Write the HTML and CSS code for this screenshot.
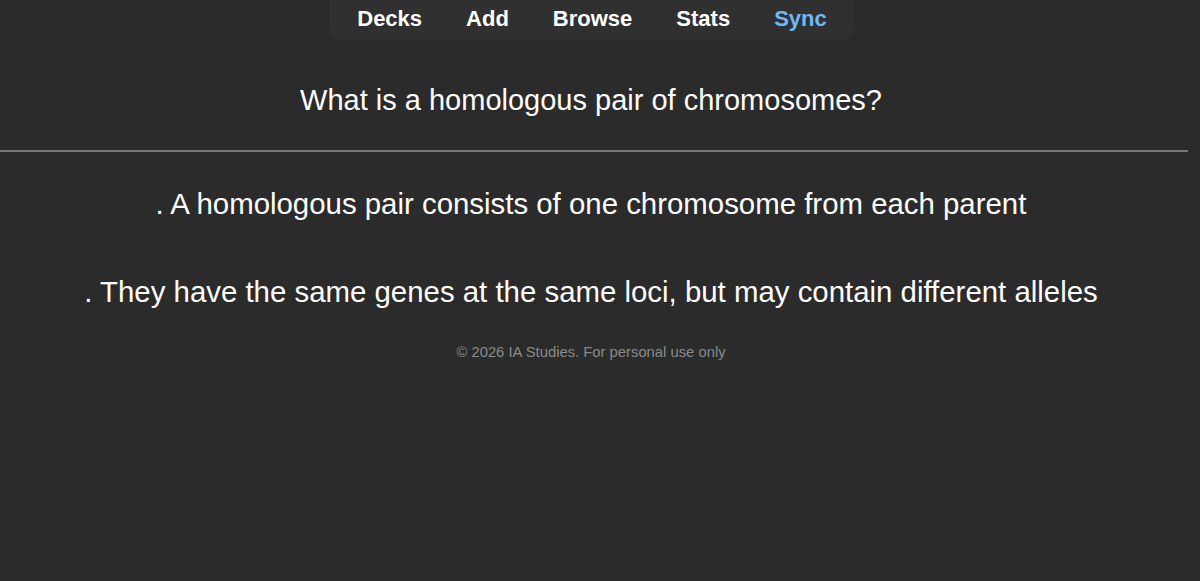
FILE: index.html
```html
<!DOCTYPE html>
<html lang="en">
<head>
    <meta charset="UTF-8">
    <meta name="viewport" content="width=device-width, initial-scale=1.0">
    <title>IA Studies - Review</title>
    <link rel="stylesheet" href="styles.css">
</head>
<body>

    <!-- Top navigation -->
    <div class="nav-wrap">
        <nav class="nav-bar">
            <a href="#">Decks</a>
            <a href="#">Add</a>
            <a href="#">Browse</a>
            <a href="#">Stats</a>
            <a href="#" class="sync">Sync</a>
        </nav>
    </div>

    <!-- Card -->
    <div class="card">
        <div class="question">What is a homologous pair of chromosomes?</div>
        <hr class="divider">
        <div class="answer">
            <p>. A homologous pair consists of one chromosome from each parent</p>
            <p>. They have the same genes at the same loci, but may contain different alleles</p>
        </div>
    </div>

    <div class="footer">© 2026 IA Studies. For personal use only</div>

</body>
</html>
```

FILE: styles.css
```css
/* Page */
body {
    margin: 0;
    background-color: #2b2b2b;
    color: #ffffff;
    font-family: "Liberation Sans", Arial, sans-serif;
}

/* Navigation */
.nav-wrap {
    width: 1182px;
    display: flex;
    justify-content: center;
}

.nav-bar {
    display: flex;
    align-items: center;
    height: 40px;
    padding: 0 26px 0 28px;
    background-color: #303030;
    border-radius: 0 0 12px 12px;
}

.nav-bar a {
    color: #ffffff;
    text-decoration: none;
    font-weight: bold;
    font-size: 22px;
    margin-right: 44px;
    padding-bottom: 3px;
}

.nav-bar a:last-child {
    margin-right: 0;
}

.nav-bar a.sync {
    color: #6fb8f7;
}

/* Card */
.card {
    width: 1182px;
}

.question {
    text-align: center;
    font-size: 29px;
    margin-top: 44px;
    line-height: 32px;
}

.divider {
    width: 1188px;
    margin: 34px 0 0 0;
    border: none;
    border-top: 2px solid #777777;
    height: 0;
}

.answer {
    text-align: center;
    font-size: 29.4px;
    margin-top: 36px;
}

.answer p {
    margin: 0 0 56px 0;
    line-height: 32px;
}

.answer p:last-child {
    margin-bottom: 0;
}

/* Footer */
.footer {
    width: 1182px;
    text-align: center;
    color: #8a8a8a;
    font-size: 14.8px;
    margin-top: 36px;
}
```
